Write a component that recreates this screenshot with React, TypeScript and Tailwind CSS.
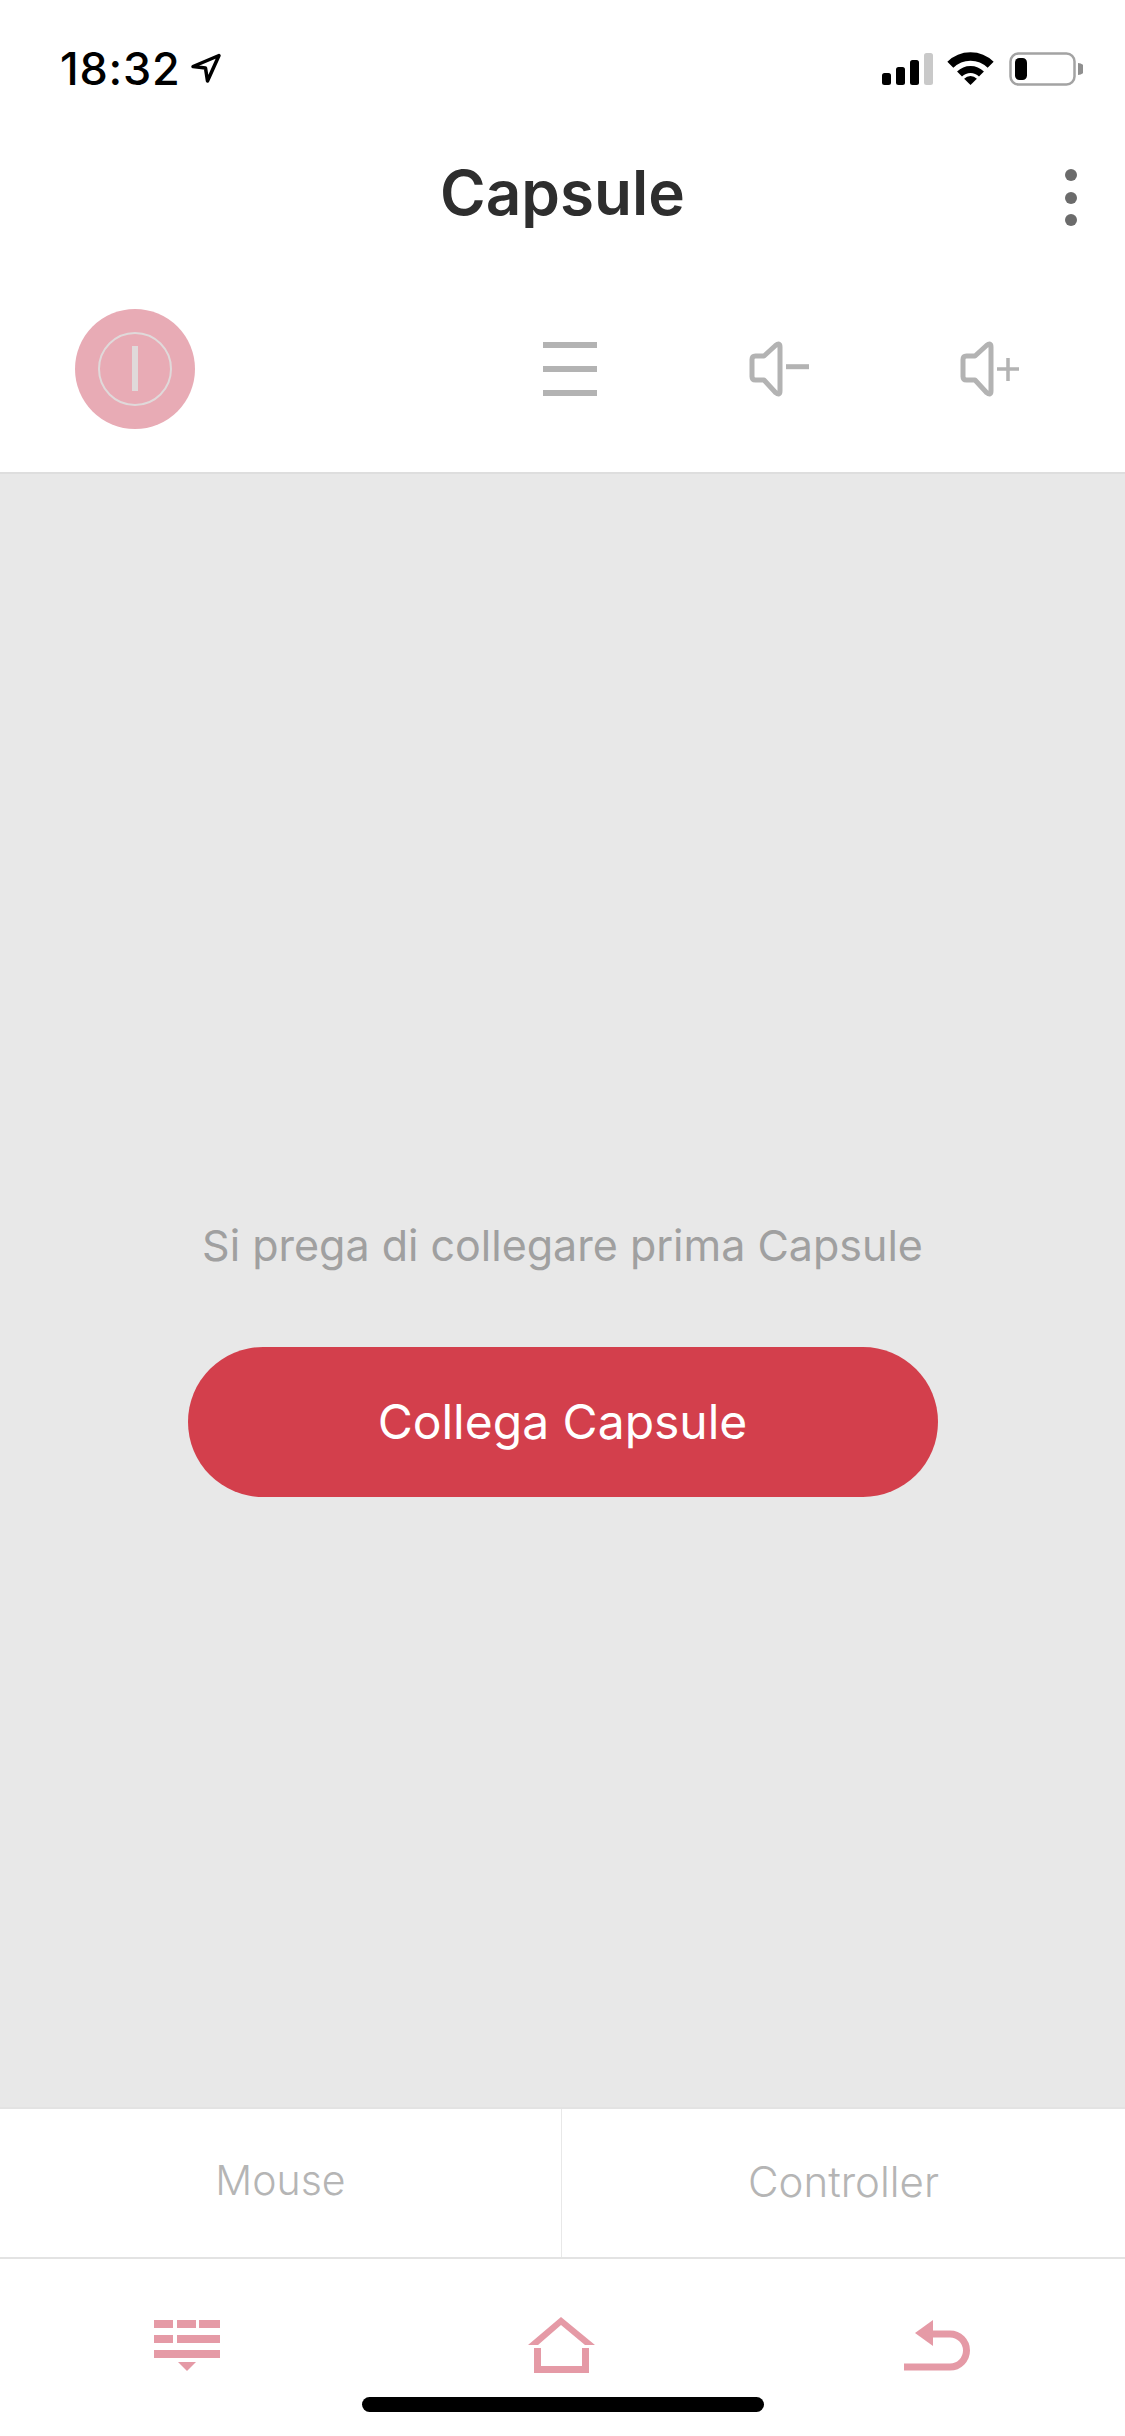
export default function App() {
  return (
    <div className="w-[1125px] h-[2436px] relative flex flex-col bg-white font-['Inter',sans-serif] overflow-hidden">
      {/* status bar */}
      <div className="h-[120px] flex items-start pt-[52px] pl-[60px]">
        <span className="text-[45px] leading-[34px] font-medium text-black tracking-[0.8px]">18:32</span>
        <svg className="ml-[9px] mt-[1px]" width="32" height="30" viewBox="0 0 32 30" fill="none" stroke="#000" strokeWidth="3.5" strokeLinejoin="round">
          <path d="M29 2.5 L3 13.5 L15.5 15 L17.5 28 Z" />
        </svg>
        <svg className="ml-auto mr-[42px]" width="202" height="34" viewBox="881 52 202 34">
          <rect x="882" y="73" width="9" height="12" rx="2.5" fill="#000" />
          <rect x="896" y="67" width="9" height="18" rx="2.5" fill="#000" />
          <rect x="910" y="60" width="9" height="25" rx="2.5" fill="#000" />
          <rect x="924" y="53" width="9" height="32" rx="2.5" fill="#c9c9c9" />
          <g transform="translate(948 52)">
            <path d="M2.35 12.85A28.5 28.5 0 0 1 42.65 12.85" fill="none" stroke="#000" strokeWidth="8.5" />
            <path d="M11.54 22.04A15.5 15.5 0 0 1 33.46 22.04" fill="none" stroke="#000" strokeWidth="7" />
            <path d="M22.5 33L16.14 26.64A9 9 0 0 1 28.86 26.64Z" fill="#000" />
          </g>
          <rect x="1010.5" y="53.5" width="64" height="31" rx="8" fill="none" stroke="#a3a3a3" strokeWidth="2.5" />
          <rect x="1015" y="58" width="12" height="22" rx="4.5" fill="#000" />
          <path d="M1078 63A7 6 0 0 1 1078 75Z" fill="#8f8f8f" />
        </svg>
      </div>

      {/* title */}
      <div className="h-[146px] relative flex items-center justify-center">
        <h1 className="text-[62px] leading-none font-semibold text-[#2e2e2e]">Capsule</h1>
        <div className="absolute left-[1065px] top-[49px] flex flex-col gap-[10.5px]">
          <div className="w-3 h-3 rounded-full bg-[#6b6b6b]" />
          <div className="w-3 h-3 rounded-full bg-[#6b6b6b]" />
          <div className="w-3 h-3 rounded-full bg-[#6b6b6b]" />
        </div>
      </div>

      {/* toolbar */}
      <div className="h-[208px] flex items-center pl-[75px] pr-[105px] pb-[1px] border-b-2 border-[#dedede]">
        <div className="w-[120px] h-[120px] rounded-full bg-[#e8abb5] flex items-center justify-center">
          <div className="w-[74px] h-[74px] rounded-full border-2 border-[#e0d9da] flex items-center justify-center">
            <div className="w-[6px] h-[45px] bg-[#e0d9da]" />
          </div>
        </div>
        <div className="ml-[348px] w-[54px] h-[54px] flex flex-col justify-between">
          <div className="h-[6px] bg-[#b3b3b3]" />
          <div className="h-[6px] bg-[#b3b3b3]" />
          <div className="h-[6px] bg-[#b3b3b3]" />
        </div>
        <SpeakerIcon className="ml-[152px]" minus />
        <SpeakerIcon className="ml-[151px]" />
      </div>

      {/* main */}
      <div className="flex-1 bg-[#e8e8e8] flex flex-col items-center pt-[746px]">
        <p className="text-[43px] leading-[50px] text-[#a0a0a0]">Si prega di collegare prima Capsule</p>
        <button className="mt-[77px] w-[750px] h-[150px] rounded-full bg-[#d33f4c] text-white text-[48px]">Collega Capsule</button>
      </div>

      {/* tabs */}
      <div className="h-[152px] flex border-y-2 border-[#e3e3e3]">
        <div className="w-[562px] pb-[4px] flex items-center justify-center text-[41px] font-light text-[#b5b5b5] border-r border-[#e8e8e8]">Mouse</div>
        <div className="flex-1 pb-[4px] flex items-center justify-center text-[42px] font-light text-[#b5b5b5]">Controller</div>
      </div>

      {/* bottom nav */}
      <div className="h-[177px] flex items-start pt-[58px] pl-[154px]">
        <svg width="66" height="56" viewBox="0 0 66 56" fill="#e59aa6">
          <rect x="0" y="3" width="19" height="8" />
          <rect x="23" y="3" width="19" height="8" />
          <rect x="45" y="3" width="21" height="8" />
          <rect x="0" y="18" width="19" height="8" />
          <rect x="23" y="18" width="43" height="8" />
          <rect x="0" y="33" width="66" height="8" />
          <path d="M24 45H42L33 54Z" />
        </svg>
        <svg className="ml-[308px]" width="67" height="56" viewBox="0 0 67 56" fill="#e59aa6">
          <path d="M0 28L33 0L67 28H57L33 8L10 28Z" />
          <path d="M6 31H13V49H54V31H61V56H6Z" />
        </svg>
        <svg className="ml-[309px]" width="66" height="56" viewBox="0 0 66 56" fill="none">
          <path d="M0 50H46A16.5 16.5 0 0 0 46 17H25" stroke="#e59aa6" strokeWidth="7" />
          <path d="M11 16L29 3V29Z" fill="#e59aa6" />
        </svg>
      </div>

      {/* home indicator */}
      <div className="absolute left-[362px] top-[2397px] w-[402px] h-[15px] rounded-full bg-black" />
    </div>
  );
}

function SpeakerIcon({ className, minus }: { className?: string; minus?: boolean }) {
  return (
    <svg className={className} width="60" height="56" viewBox="0 0 60 56" fill="none" stroke="#b3b3b3" strokeLinejoin="round">
      <path d="M15 15L26.5 4.5Q31 1 31 6V50Q31 55 26.5 51.5L15 39H6.5Q3 39 3 35.5V18.5Q3 15 6.5 15Z" strokeWidth="5" />
      {minus ? (
        <path d="M37 25.7H60" strokeWidth="5" />
      ) : (
        <path d="M37 28H59M48 17V40" strokeWidth="3.5" />
      )}
    </svg>
  );
}
